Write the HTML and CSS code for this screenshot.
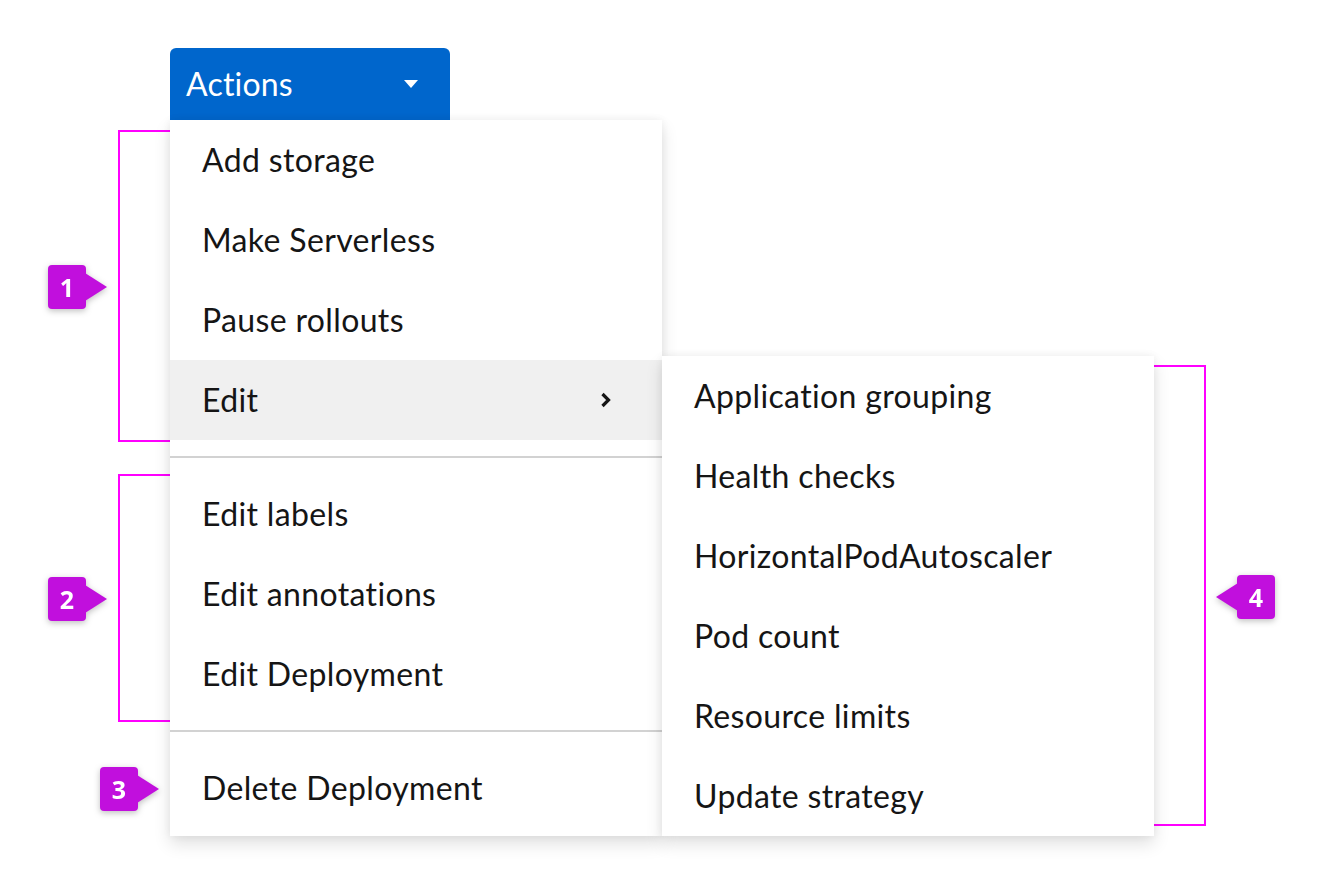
FILE: index.html
```html
<!DOCTYPE html>
<html lang="en">
<head>
<meta charset="utf-8">
<title>Actions menu</title>
<link rel="stylesheet" href="styles.css">
</head>
<body>
<div class="stage">
  <div class="bracket bracket-1"></div>
  <div class="bracket bracket-2"></div>
  <div class="bracket bracket-4"></div>

  <div class="badge badge-1 point-right"><span class="badge-num">1</span><span class="badge-tip"></span></div>
  <div class="badge badge-2 point-right"><span class="badge-num">2</span><span class="badge-tip"></span></div>
  <div class="badge badge-3 point-right"><span class="badge-num">3</span><span class="badge-tip"></span></div>
  <div class="badge badge-4 point-left"><span class="badge-tip"></span><span class="badge-num">4</span></div>

  <div class="dropdown">
    <button class="toggle" type="button">
      <span class="toggle-text">Actions</span>
      <svg class="caret" width="14" height="8" viewBox="0 0 14 8"><path d="M0 0 L14 0 L7 8 Z" fill="#fff"/></svg>
    </button>
    <div class="menu">
      <ul class="menu-list">
        <li class="menu-item">Add storage</li>
        <li class="menu-item">Make Serverless</li>
        <li class="menu-item">Pause rollouts</li>
        <li class="menu-item is-hover">
          <span>Edit</span>
          <svg class="chevron" width="12" height="16" viewBox="0 0 12 16"><path d="M2.5 2 L8.5 8 L2.5 14" fill="none" stroke="#151515" stroke-width="3.2" stroke-linejoin="miter" stroke-linecap="butt"/></svg>
        </li>
      </ul>
      <div class="divider"></div>
      <ul class="menu-list">
        <li class="menu-item">Edit labels</li>
        <li class="menu-item">Edit annotations</li>
        <li class="menu-item">Edit Deployment</li>
      </ul>
      <div class="divider"></div>
      <ul class="menu-list">
        <li class="menu-item">Delete Deployment</li>
      </ul>

      <div class="submenu">
        <ul class="menu-list">
          <li class="menu-item">Application grouping</li>
          <li class="menu-item">Health checks</li>
          <li class="menu-item">HorizontalPodAutoscaler</li>
          <li class="menu-item">Pod count</li>
          <li class="menu-item">Resource limits</li>
          <li class="menu-item">Update strategy</li>
        </ul>
      </div>
    </div>
  </div>
</div>
</body>
</html>
```
FILE: styles.css
```css
html, body {
  margin: 0;
  padding: 0;
  background: #ffffff;
}

body {
  font-family: Lato, "Noto Sans", sans-serif;
  color: #151515;
}

.stage {
  position: relative;
  width: 1324px;
  height: 884px;
  padding: 48px 0 0 170px;
  box-sizing: border-box;
  overflow: hidden;
}

.dropdown {
  position: relative;
  z-index: 2;
  width: 492px;
}

.toggle {
  display: flex;
  align-items: center;
  justify-content: space-between;
  width: 280px;
  height: 72px;
  padding: 0 32px 0 16px;
  box-sizing: border-box;
  border: 0;
  border-radius: 6px 6px 0 0;
  background: #0066cc;
  color: #ffffff;
  font-family: inherit;
  font-size: 32px;
  line-height: 48px;
  letter-spacing: 0.2px;
  cursor: pointer;
}

.caret {
  display: block;
}

.menu {
  position: relative;
  width: 492px;
  background: #ffffff;
  padding-bottom: 8px;
  box-shadow: 0 8px 16px 0 rgba(3, 3, 3, 0.12), 0 0 8px 0 rgba(3, 3, 3, 0.06);
}

.menu-list {
  list-style: none;
  margin: 0;
  padding: 0;
}

.menu-item {
  display: flex;
  align-items: center;
  justify-content: space-between;
  height: 80px;
  padding: 0 50px 0 32px;
  box-sizing: border-box;
  font-size: 32px;
  line-height: 48px;
  letter-spacing: 0.35px;
  white-space: nowrap;
}

.menu-item.is-hover {
  background: #f0f0f0;
}

.chevron {
  display: block;
}

.divider {
  height: 2px;
  margin: 16px 0;
  background: #d2d2d2;
}

.submenu {
  position: absolute;
  left: 492px;
  top: 236px;
  width: 492px;
  background: #ffffff;
  box-shadow: 0 8px 16px 0 rgba(3, 3, 3, 0.12), 0 0 8px 0 rgba(3, 3, 3, 0.06);
}

.bracket {
  position: absolute;
  z-index: 1;
  box-sizing: border-box;
  border: 2px solid #ff00ff;
}

.bracket-1 {
  left: 118px;
  top: 130px;
  width: 60px;
  height: 312px;
  border-right: 0;
}

.bracket-2 {
  left: 118px;
  top: 474px;
  width: 60px;
  height: 248px;
  border-right: 0;
}

.bracket-4 {
  left: 1146px;
  top: 365px;
  width: 60px;
  height: 461px;
  border-left: 0;
}

.badge {
  position: absolute;
  z-index: 3;
  display: flex;
  align-items: center;
  filter: drop-shadow(0 2px 3px rgba(0, 0, 0, 0.25));
}

.badge-num {
  display: flex;
  align-items: center;
  justify-content: center;
  width: 38px;
  height: 44px;
  border-radius: 4px;
  background: #c10fdd;
  color: #ffffff;
  font-family: "Open Sans", Lato, sans-serif;
  font-weight: 700;
  font-size: 25px;
  line-height: 1;
}

.badge-tip {
  width: 0;
  height: 0;
  border-top: 14px solid transparent;
  border-bottom: 14px solid transparent;
}

.point-right .badge-tip {
  border-left: 22px solid #c10fdd;
  margin-left: -1px;
}

.point-left .badge-tip {
  border-right: 22px solid #c10fdd;
  margin-right: -1px;
}

.badge-1 { left: 48px; top: 265px; }
.badge-2 { left: 48px; top: 577px; }
.badge-3 { left: 100px; top: 767px; }
.badge-4 { left: 1216px; top: 575px; }
```
